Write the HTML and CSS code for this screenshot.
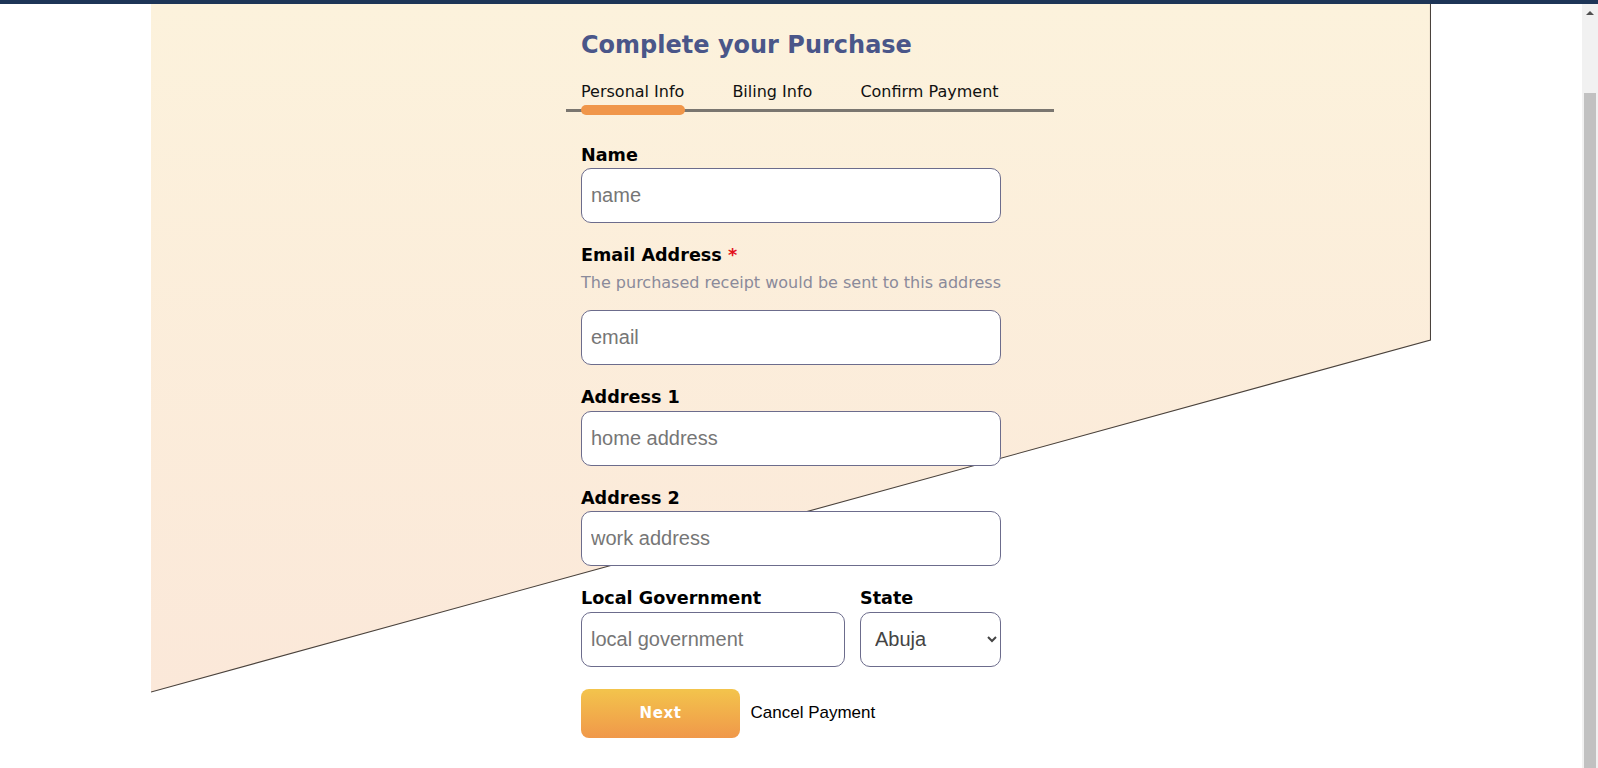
FILE: index.html
```html
<!DOCTYPE html>
<html lang="en">
<head>
<meta charset="utf-8">
<title>Complete your Purchase</title>
<link rel="stylesheet" href="styles.css">
</head>
<body>
<div class="chrome-bar"></div>
<div class="viewport">
  <main class="page">
    <div class="hero">
      <svg class="hero-bg" width="1280" height="690" viewBox="0 0 1280 690" aria-hidden="true">
        <defs>
          <linearGradient id="heroGrad" x1="0" y1="0" x2="0" y2="1">
            <stop offset="0" stop-color="#fcf2dc"/>
            <stop offset="1" stop-color="#fbe8d9"/>
          </linearGradient>
        </defs>
        <polygon points="0,0 1280,0 1280,336 0,688" fill="url(#heroGrad)"/>
        <polyline points="1279.5,0 1279.5,336 0,688" fill="none" stroke="#4a423c" stroke-width="1.1"/>
      </svg>
      <section class="checkout">
        <h1 class="title">Complete your Purchase</h1>
        <nav class="tabs">
          <div class="tab-labels">
            <span class="tab">Personal Info</span>
            <span class="tab">Biling Info</span>
            <span class="tab">Confirm Payment</span>
          </div>
          <div class="tab-track"><span class="tab-indicator"></span></div>
        </nav>
        <form class="form">
          <div class="field">
            <label class="label" for="name">Name</label>
            <input class="input" id="name" type="text" placeholder="name">
          </div>
          <div class="field">
            <label class="label" for="email">Email Address <span class="req">*</span></label>
            <p class="hint">The purchased receipt would be sent to this address</p>
            <input class="input" id="email" type="email" placeholder="email">
          </div>
          <div class="field">
            <label class="label" for="addr1">Address 1</label>
            <input class="input" id="addr1" type="text" placeholder="home address">
          </div>
          <div class="field">
            <label class="label" for="addr2">Address 2</label>
            <input class="input" id="addr2" type="text" placeholder="work address">
          </div>
          <div class="field-row">
            <div class="field grow">
              <label class="label" for="lga">Local Government</label>
              <input class="input" id="lga" type="text" placeholder="local government">
            </div>
            <div class="field state">
              <label class="label" for="state">State</label>
              <select class="input select" id="state">
                <option>Abuja</option>
                <option>Lagos</option>
              </select>
            </div>
          </div>
          <div class="actions">
            <button class="btn-next" type="button">Next</button>
            <a class="cancel" href="#">Cancel Payment</a>
          </div>
        </form>
      </section>
    </div>
  </main>
  <div class="scrollbar">
    <div class="scroll-arrow"></div>
    <div class="scroll-thumb"></div>
  </div>
</div>
</body>
</html>
```

FILE: styles.css
```css
* { box-sizing: border-box; }

html, body {
  margin: 0;
  padding: 0;
  height: 768px;
  overflow: hidden;
  background: #ffffff;
  font-family: "DejaVu Sans", Verdana, sans-serif;
}

.chrome-bar {
  height: 4px;
  background: #1d3557;
}

.viewport {
  display: flex;
  height: 764px;
}

.page {
  flex: 1;
  min-width: 0;
  background: #ffffff;
}

.hero {
  position: relative;
  width: 1280px;
  margin: 0 auto;
}

.hero-bg {
  position: absolute;
  top: 0;
  left: 0;
  z-index: 0;
  display: block;
}

.checkout {
  position: relative;
  z-index: 1;
  width: 488px;
  margin-left: 415px;
  padding-top: 27px;
}

.title {
  margin: 0 0 0 15px;
  font-family: "DejaVu Sans", Verdana, sans-serif;
  font-weight: bold;
  font-size: 24px;
  line-height: normal;
  color: #4a5689;
}

.tabs {
  margin-top: 22.7px;
}

.tab-labels {
  display: flex;
  gap: 48px;
  padding-left: 15px;
  padding-bottom: 8.6px;
}

.tab {
  font-size: 16px;
  line-height: normal;
  color: #111111;
}

.tab-track {
  position: relative;
  height: 3px;
  background: #7a7670;
}

.tab-indicator {
  position: absolute;
  left: 15px;
  top: -4px;
  width: 104px;
  height: 10px;
  border-radius: 5px;
  background: #f0964a;
}

.form {
  width: 420px;
  margin: 32.7px 0 0 15px;
}

.field {
  display: flex;
  flex-direction: column;
  margin-bottom: 22px;
}

.label {
  font-family: "DejaVu Sans", Verdana, sans-serif;
  font-weight: bold;
  font-size: 17.6px;
  line-height: normal;
  color: #000000;
  margin-bottom: 3.5px;
}

.req {
  color: #e3111b;
}

.hint {
  margin: 4.1px 0 18.3px;
  font-size: 16px;
  line-height: normal;
  color: #8a8a9a;
  white-space: nowrap;
}

.input {
  height: 55px;
  width: 100%;
  border: 1px solid #6c6c8c;
  border-radius: 10px;
  padding: 0 9px;
  font-family: "Liberation Sans", Arial, sans-serif;
  font-size: 20px;
  color: #333333;
  background: #ffffff;
  outline: none;
}

.input::placeholder {
  color: #767676;
}

.select {
  color: #444444;
  padding: 0 6px 0 10px;
}

.field-row {
  display: flex;
  gap: 15px;
}

.grow {
  flex: 1;
  min-width: 0;
}

.state {
  width: 141px;
  flex: none;
}

.actions {
  display: flex;
  align-items: center;
  gap: 10.5px;
}

.btn-next {
  width: 159px;
  height: 49px;
  border: none;
  border-radius: 8px;
  background: linear-gradient(to bottom, #f3c44c, #f0984a);
  color: #ffffff;
  font-family: "DejaVu Sans", Verdana, sans-serif;
  font-weight: bold;
  font-size: 15px;
  letter-spacing: 0.6px;
  cursor: pointer;
}

.cancel {
  font-family: "Liberation Sans", Arial, sans-serif;
  font-size: 17px;
  color: #000000;
  text-decoration: none;
}

.scrollbar {
  width: 16px;
  flex: none;
  background: #f1f1f1;
  display: flex;
  flex-direction: column;
  align-items: center;
}

.scroll-arrow {
  margin-top: 7px;
  width: 0;
  height: 0;
  border-left: 4px solid transparent;
  border-right: 4px solid transparent;
  border-bottom: 4px solid #505050;
}

.scroll-thumb {
  margin-top: 78px;
  width: 12px;
  flex: 1;
  background: #c1c1c1;
}
```
